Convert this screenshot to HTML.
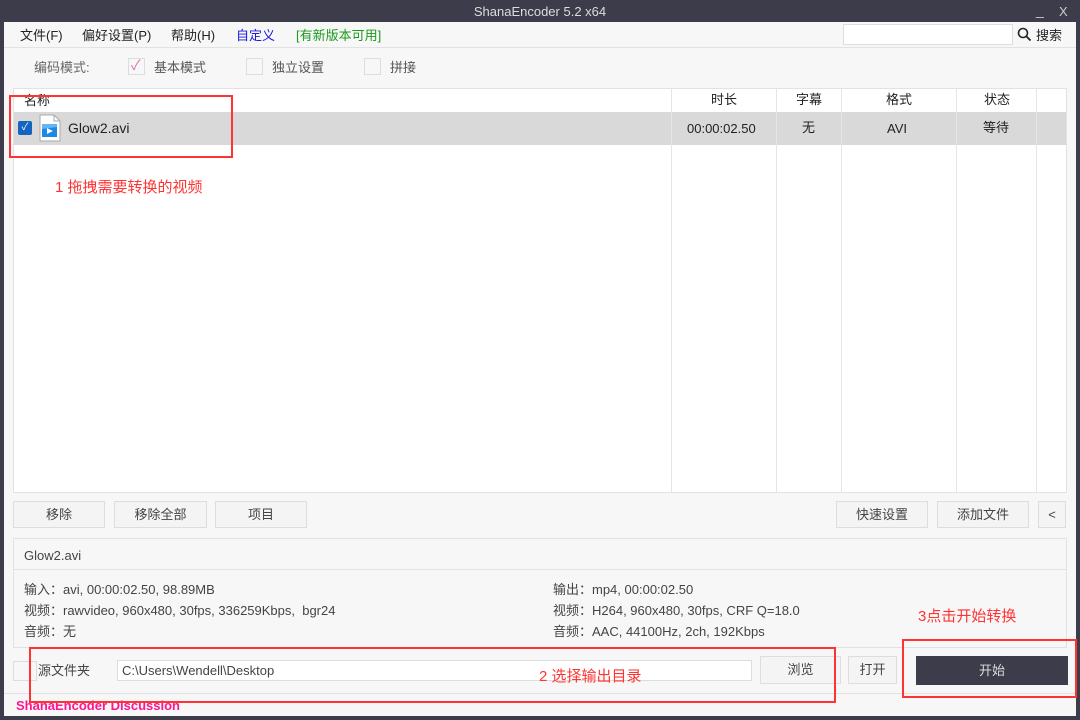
<!DOCTYPE html>
<html><head><meta charset="utf-8"><style>
*{margin:0;padding:0;box-sizing:border-box}
body{width:1080px;height:720px;background:#3c3c4a;position:relative;overflow:hidden;font-family:"Liberation Sans","Noto Sans CJK SC",sans-serif;font-size:13px;color:#222;line-height:16px}
.a{position:absolute;white-space:nowrap}
.client{left:4px;top:22px;width:1072px;height:694px;background:#f7f7f7}
.btn{position:absolute;border:1px solid #ddd;background:#f4f4f4;text-align:center;color:#444;font-size:13px}
.cb{position:absolute;width:17px;height:17px;border:1px solid #ddd;background:#f7f7f7}
.red{position:absolute;border:2px solid #f33}
.rt{position:absolute;color:#f33;font-size:15px;line-height:18px;white-space:nowrap}
.vl{position:absolute;top:88px;height:404px;width:1px;background:#dfe6ee}
.info{position:absolute;color:#444;font-size:13px;white-space:nowrap}
</style></head><body>
<div class="a" style="left:0;top:4px;width:1080px;text-align:center;color:#ddd;font-size:13px">ShanaEncoder 5.2 x64</div>
<div class="a" style="left:1036px;top:2px;color:#ccc;font-size:14px">_</div>
<div class="a" style="left:1059px;top:4px;color:#ccc;font-size:13px">X</div>
<div class="a client"></div>
<div class="a" style="left:20px;top:28px">文件(F)</div>
<div class="a" style="left:82px;top:28px">偏好设置(P)</div>
<div class="a" style="left:171px;top:28px">帮助(H)</div>
<div class="a" style="left:236px;top:28px;color:#1a1ae0">自定义</div>
<div class="a" style="left:296px;top:28px;color:#1a9a1a">[有新版本可用]</div>
<div class="a" style="left:843px;top:24px;width:170px;height:21px;background:#fff;border:1px solid #ddd"></div>
<svg class="a" style="left:1017px;top:27px" width="15" height="15" viewBox="0 0 15 15"><circle cx="6" cy="6" r="4.5" fill="none" stroke="#222" stroke-width="1.6"/><path d="M9.3 9.3L13.5 13.5" stroke="#222" stroke-width="1.8"/></svg>
<div class="a" style="left:1036px;top:28px">搜索</div>
<div class="a" style="left:4px;top:47px;width:1072px;height:1px;background:#e2e2e2"></div>
<div class="a" style="left:34px;top:60px;color:#666">编码模式:</div>
<div class="cb" style="left:128px;top:58px"></div>
<div class="a" style="left:131px;top:57px;color:#e070b0;font-size:14px">✓</div>
<div class="a" style="left:154px;top:60px;color:#555">基本模式</div>
<div class="cb" style="left:246px;top:58px"></div>
<div class="a" style="left:272px;top:60px;color:#555">独立设置</div>
<div class="cb" style="left:364px;top:58px"></div>
<div class="a" style="left:390px;top:60px;color:#555">拼接</div>
<div class="a" style="left:13px;top:88px;width:1054px;height:405px;background:#fff;border:1px solid #e2e2e2"></div>
<div class="a" style="left:14px;top:112px;width:1052px;height:33px;background:#d9d9d9"></div>
<div class="vl" style="left:671px"></div><div class="vl" style="left:776px"></div><div class="vl" style="left:841px"></div><div class="vl" style="left:956px"></div><div class="vl" style="left:1036px"></div>
<div class="a" style="left:24px;top:93px">名称</div>
<div class="a" style="left:711px;top:92px">时长</div>
<div class="a" style="left:796px;top:92px">字幕</div>
<div class="a" style="left:886px;top:92px">格式</div>
<div class="a" style="left:984px;top:92px">状态</div>
<div class="a" style="left:18px;top:121px;width:14px;height:14px;background:#1565c0;border-radius:2px;color:#fff;font-size:10px;text-align:center;line-height:14px">✓</div>
<svg class="a" style="left:39px;top:114px" width="22" height="28" viewBox="0 0 22 28"><path d="M1 1H15L21 7V27H1Z" fill="#fff" stroke="#aaa"/><path d="M15 1V7H21" fill="none" stroke="#aaa"/><rect x="3" y="10" width="15" height="13" fill="#1e88e5"/><path d="M3 10H18V13L3 15Z" fill="#64b5f6"/><path d="M8 14L14 17L8 20Z" fill="#fff"/></svg>
<div class="a" style="left:68px;top:120px;font-size:14px">Glow2.avi</div>
<div class="a" style="left:687px;top:121px">00:00:02.50</div>
<div class="a" style="left:802px;top:120px">无</div>
<div class="a" style="left:887px;top:121px">AVI</div>
<div class="a" style="left:983px;top:120px">等待</div>
<div class="btn" style="left:13px;top:501px;width:92px;height:27px;line-height:25px">移除</div>
<div class="btn" style="left:114px;top:501px;width:93px;height:27px;line-height:25px">移除全部</div>
<div class="btn" style="left:215px;top:501px;width:92px;height:27px;line-height:25px">项目</div>
<div class="btn" style="left:836px;top:501px;width:92px;height:27px;line-height:25px">快速设置</div>
<div class="btn" style="left:937px;top:501px;width:92px;height:27px;line-height:25px">添加文件</div>
<div class="btn" style="left:1038px;top:501px;width:28px;height:27px;line-height:25px">&lt;</div>
<div class="a" style="left:13px;top:538px;width:1054px;height:110px;border:1px solid #e2e2e2"></div>
<div class="a" style="left:14px;top:569px;width:1052px;height:1px;background:#e2e2e2"></div>
<div class="info" style="left:24px;top:548px">Glow2.avi</div>
<div class="info" style="left:24px;top:582px">输入：avi, 00:00:02.50, 98.89MB</div>
<div class="info" style="left:24px;top:603px">视频：rawvideo, 960x480, 30fps, 336259Kbps,&nbsp; bgr24</div>
<div class="info" style="left:24px;top:624px">音频：无</div>
<div class="info" style="left:553px;top:582px">输出：mp4, 00:00:02.50</div>
<div class="info" style="left:553px;top:603px">视频：H264, 960x480, 30fps, CRF Q=18.0</div>
<div class="info" style="left:553px;top:624px">音频：AAC, 44100Hz, 2ch, 192Kbps</div>
<div class="a" style="left:13px;top:661px;width:24px;height:20px;border:1px solid #ddd"></div>
<div class="info" style="left:38px;top:663px">源文件夹</div>
<div class="a" style="left:117px;top:660px;width:635px;height:21px;background:#fff;border:1px solid #ddd"></div>
<div class="info" style="left:122px;top:663px">C:\Users\Wendell\Desktop</div>
<div class="btn" style="left:760px;top:656px;width:81px;height:28px;line-height:26px">浏览</div>
<div class="btn" style="left:848px;top:656px;width:49px;height:28px;line-height:26px">打开</div>
<div class="a" style="left:916px;top:656px;width:152px;height:29px;background:#3c3c4a;color:#ddd;text-align:center;line-height:29px">开始</div>
<div class="a" style="left:4px;top:693px;width:1072px;height:1px;background:#e2e2e2"></div>
<div class="a" style="left:16px;top:698px;color:#ff1493;font-weight:bold;font-size:13px">ShanaEncoder Discussion</div>
<div class="red" style="left:9px;top:95px;width:224px;height:63px"></div>
<div class="red" style="left:29px;top:647px;width:807px;height:56px"></div>
<div class="red" style="left:902px;top:639px;width:175px;height:59px"></div>
<div class="rt" style="left:55px;top:179px">1 拖拽需要转换的视频</div>
<div class="rt" style="left:539px;top:668px">2 选择输出目录</div>
<div class="rt" style="left:918px;top:608px">3点击开始转换</div>
</body></html>
